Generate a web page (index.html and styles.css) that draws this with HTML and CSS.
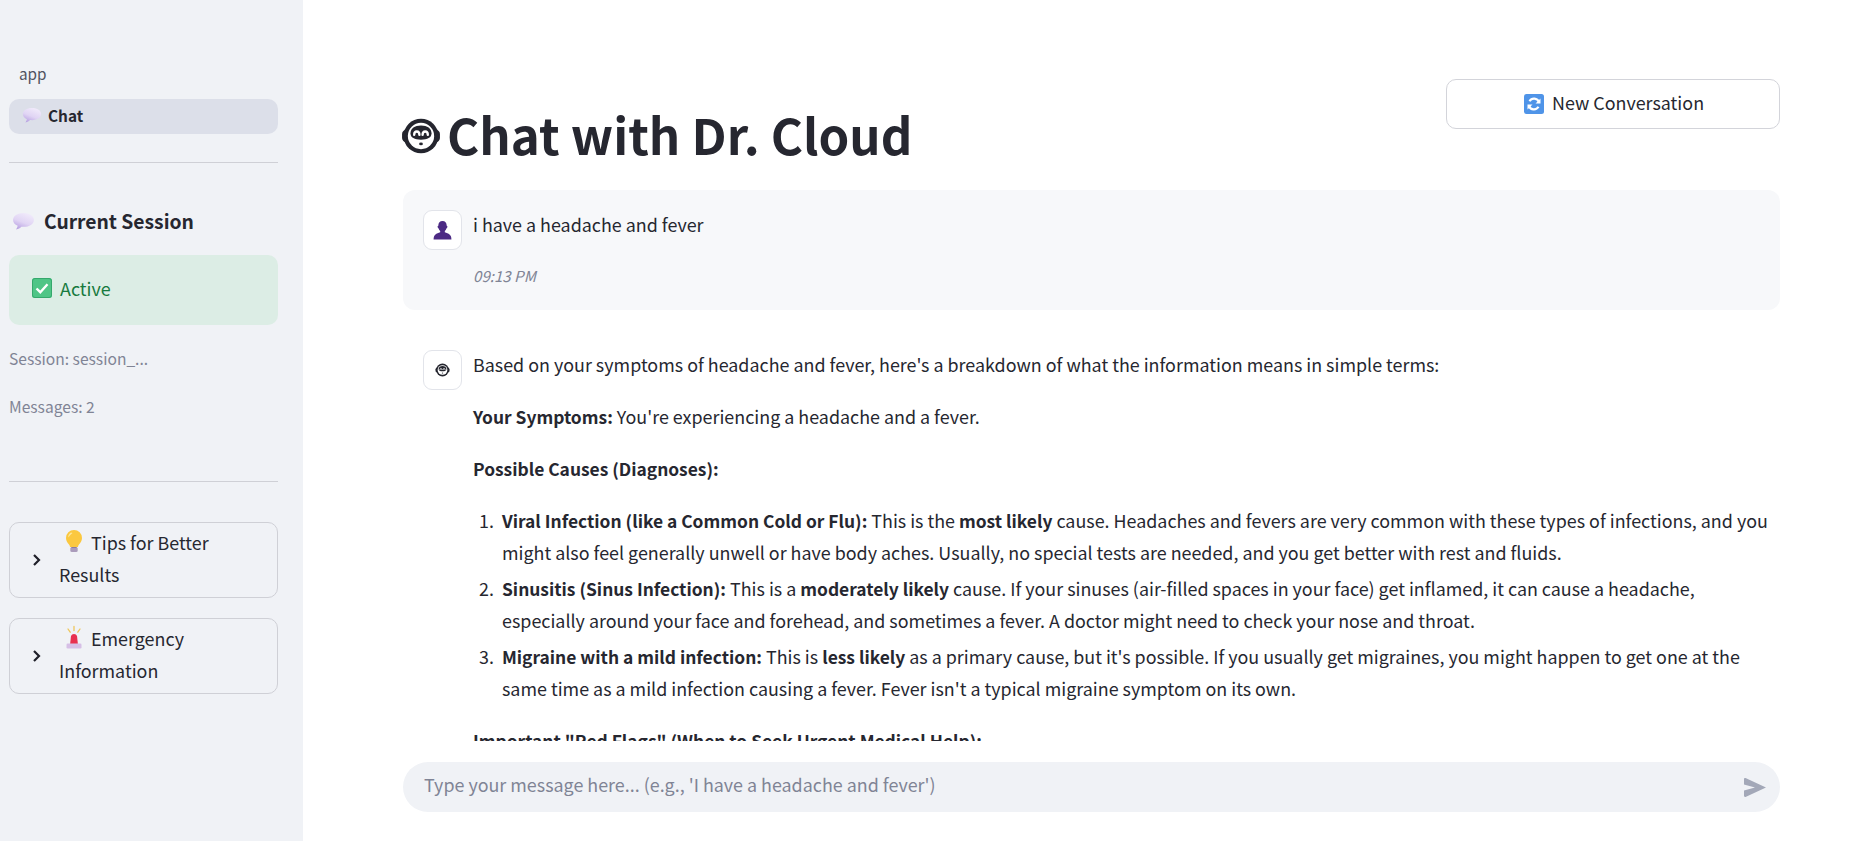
FILE: index.html
```html
<!DOCTYPE html>
<html lang="en">
<head>
  <meta charset="UTF-8" />
  <title>Chat with Dr. Cloud</title>
  <link rel="stylesheet" href="styles.css">
</head>
<body>

<svg class="defs" width="0" height="0">
  <defs>
    <linearGradient id="bubble-fill" x1="0.7" y1="0" x2="0.2" y2="1">
      <stop offset="0" stop-color="#f1ebfb"/>
      <stop offset="0.55" stop-color="#e0d4f4"/>
      <stop offset="1" stop-color="#b49ce0"/>
    </linearGradient>
    <symbol id="bubble" viewBox="0 0 24 20">
      <path fill="url(#bubble-fill)" d="M12 1C5.700 1 1 4.100 1 8.300c0 2.700 1.900 4.900 4.900 6.200-.2 1.300-.8 2.600-1.700 3.800 2.300-.4 4.300-1.500 5.600-2.900.7.100 1.400.2 2.200.2 6.300 0 11-3.100 11-7.300S18.300 1 12 1z"/>
    </symbol>
    <symbol id="face" viewBox="0 0 38 36">
      <rect x="1" y="12" width="36" height="12" rx="4" fill="#24252e"/>
      <circle cx="19" cy="18" r="16.500" fill="#24252e"/>
      <circle cx="19" cy="18" r="12.500" fill="#fff"/>
      <path fill="#24252e" d="M19 8c6 0 10 2.800 10 7.500 0 4.300-3.800 6-10 6s-10-1.700-10-6C9 10.800 13 8 19 8z"/>
      <path fill="none" stroke="#fff" stroke-width="2.200" stroke-linecap="round" d="M12.500 17c0-4.400 5-4.400 5 0M20.500 17c0-4.400 5-4.400 5 0"/>
      <ellipse cx="19" cy="25.500" rx="1.800" ry="1.300" fill="#24252e"/>
    </symbol>
  </defs>
</svg>

<aside class="sidebar">
  <div class="nav-label">app</div>
  <a class="nav-item">
    <svg class="emoji nav-emoji"><use href="#bubble"/></svg>
    <span>Chat</span>
  </a>
  <hr class="rule rule-top">

  <h3 class="session-title">
    <svg class="emoji title-emoji"><use href="#bubble"/></svg>
    Current Session
  </h3>
  <div class="status">
    <svg class="emoji status-emoji" viewBox="0 0 20 20">
      <rect x="0" y="0" width="20" height="20" rx="2.500" fill="#4fc586"/>
      <rect x="0.500" y="0.500" width="19" height="19" rx="2.500" fill="none" stroke="#35a86c" stroke-width="1"/>
      <path d="M4.500 10.500l3.800 3.700 7.200-8" fill="none" stroke="#fff" stroke-width="2.400"/>
    </svg>
    Active
  </div>
  <p class="meta meta-first">Session: session_...</p>
  <p class="meta">Messages: 2</p>
  <hr class="rule rule-bottom">

  <div class="expander">
    <svg class="chevron" viewBox="0 0 10 14"><path d="M2 2l5 5-5 5" fill="none" stroke="#1f2029" stroke-width="2.200"/></svg>
    <div class="expander-text">
      <svg class="emoji expander-emoji" viewBox="0 0 18 24">
        <path fill="#fbc83f" d="M9 1a8 8 0 0 0-8 8c0 3 1.600 4.700 3 6.500.7.900 1 1.700 1 2.500h8c0-.8.300-1.600 1-2.500 1.400-1.800 3-3.500 3-6.500a8 8 0 0 0-8-8z"/>
        <path fill="#fde79a" d="M6 3.500C4 4.500 3 6.500 3.300 8.500 4.500 7 5.500 5.500 7.500 4z"/>
        <rect x="5.500" y="18" width="7" height="5" rx="1.500" fill="#8c7ba0"/>
        <path stroke="#c9bdd6" stroke-width="1" d="M5.500 20h7M5.500 22h7"/>
      </svg>Tips for Better Results
    </div>
  </div>

  <div class="expander">
    <svg class="chevron" viewBox="0 0 10 14"><path d="M2 2l5 5-5 5" fill="none" stroke="#1f2029" stroke-width="2.200"/></svg>
    <div class="expander-text">
      <svg class="emoji expander-emoji" viewBox="0 0 18 24">
        <path fill="#e8304f" d="M5 20l1-9a3.200 3.200 0 0 1 6 0l1 9z"/>
        <rect x="1.500" y="18.500" width="15" height="5" rx="1.200" fill="#d6bfe6"/>
        <path stroke="#efc65a" stroke-width="1.300" stroke-linecap="round" d="M9 1.500v4M3 4l2.200 3.200M15 4l-2.200 3.200"/>
      </svg>Emergency Information
    </div>
  </div>
</aside>

<main class="main">
  <div class="top-row">
    <h1 class="page-title"><svg class="title-face"><use href="#face"/></svg>Chat with Dr. Cloud</h1>
    <button class="new-btn">
      <svg class="emoji btn-emoji" viewBox="0 0 20 20">
        <rect width="20" height="20" rx="2.500" fill="#4f94e8"/>
        <path fill="none" stroke="#fff" stroke-width="2.200" d="M15 8a5.300 5.300 0 0 0-9.500-.8M5 12a5.300 5.300 0 0 0 9.500.8"/>
        <path fill="#fff" d="M16.500 4.500v5h-5zM3.500 15.500v-5h5z"/>
      </svg>
      New Conversation
    </button>
  </div>

  <div class="messages">
    <div class="message message-user">
      <div class="avatar">
        <svg class="avatar-user" viewBox="0 0 20 20">
          <path fill="#4c2a84" d="M6 5.500C6 2.500 7.500 1 10 1s4 1.500 4 4.500c.6.200.8.700.6 1.400-.2.600-.5 1-.9 1.100-.3 1-.8 1.900-1.500 2.500v1.200c2.500.8 5.200 2 5.800 3.800.3.900.5 2 .5 3H1.500c0-1 .2-2.100.5-3 .6-1.800 3.300-3 5.800-3.800v-1.200C7.100 9.900 6.600 9 6.300 8c-.4-.1-.7-.5-.9-1.100-.2-.7 0-1.200.6-1.400z"/>
        </svg>
      </div>
      <div class="message-body">
        <p>i have a headache and fever</p>
        <p class="timestamp">09:13 PM</p>
      </div>
    </div>

    <div class="message">
      <div class="avatar">
        <svg class="avatar-face"><use href="#face"/></svg>
      </div>
      <div class="message-body">
        <p>Based on your symptoms of headache and fever, here's a breakdown of what the information means in simple terms:</p>
        <p><strong>Your Symptoms:</strong> You're experiencing a headache and a fever.</p>
        <p><strong>Possible Causes (Diagnoses):</strong></p>
        <ol>
          <li><strong>Viral Infection (like a Common Cold or Flu):</strong> This is the <strong>most likely</strong> cause. Headaches and fevers are very common with these types of infections, and you might also feel generally unwell or have body aches. Usually, no special tests are needed, and you get better with rest and fluids.</li>
          <li><strong>Sinusitis (Sinus Infection):</strong> This is a <strong>moderately likely</strong> cause. If your sinuses (air-filled spaces in your face) get inflamed, it can cause a headache, especially around your face and forehead, and sometimes a fever. A doctor might need to check your nose and throat.</li>
          <li><strong>Migraine with a mild infection:</strong> This is <strong>less likely</strong> as a primary cause, but it's possible. If you usually get migraines, you might happen to get one at the same time as a mild infection causing a fever. Fever isn't a typical migraine symptom on its own.</li>
        </ol>
        <p><strong>Important "Red Flags" (When to Seek Urgent Medical Help):</strong></p>
      </div>
    </div>
  </div>

  <div class="chat-input">
    <span class="placeholder">Type your message here... (e.g., 'I have a headache and fever')</span>
    <svg class="send" viewBox="0 0 22 19"><path fill="#a3a8b8" d="M0 1.200C0 .3.700-.2 1.500.1L22 9.500 1.500 18.900C.7 19.200 0 18.700 0 17.800v-5.300l11-3-11-3z"/></svg>
  </div>
</main>

</body>
</html>
```

FILE: styles.css
```css
* { box-sizing: border-box; }

html, body { height: 100%; }

body {
  margin: 0;
  display: flex;
  height: 841px;
  overflow: hidden;
  font-family: "Noto Sans CJK SC", "Noto Sans", sans-serif;
  font-size: 17.900px;
  line-height: 32px;
  color: #262730;
  background: #fff;
}

.defs { position: absolute; }

.emoji { display: inline-block; flex: none; }

/* sidebar */
.sidebar {
  width: 303px;
  flex: none;
  background: #f0f2f6;
  padding: 59px 25px 0 9px;
}

.nav-label {
  padding-left: 10px;
  font-size: 15.300px;
  line-height: 28px;
  color: #50525f;
}

.nav-item {
  display: flex;
  align-items: center;
  height: 35px;
  margin-top: 12px;
  padding: 0 0 4px 13px;
  border-radius: 10px;
  background: #dcdfe9;
  font-size: 15.400px;
  font-weight: 600;
}

.nav-emoji { width: 20px; height: 17px; margin: 2px 6px 0 0; }

.rule { margin: 0; border: 0; border-top: 1px solid #cfd0d6; }
.rule-top { margin-top: 28px; }
.rule-bottom { margin-top: 63px; }

.session-title {
  display: flex;
  align-items: center;
  margin: 42px 0 1px;
  padding-left: 3px;
  font-size: 19.300px;
  line-height: 32px;
  font-weight: 600;
}

.title-emoji { width: 23px; height: 19px; margin-right: 9px; }

.status {
  display: flex;
  align-items: center;
  height: 70px;
  margin-top: 18px;
  padding: 0 0 4px 23px;
  border-radius: 10px;
  background: #dcede5;
  color: #177a3e;
}

.status-emoji { width: 20px; height: 20px; margin-right: 8px; }

.meta {
  margin: 24px 0 0;
  font-size: 15.600px;
  line-height: 24px;
  color: #808495;
}

.meta-first { margin-top: 21px; }

.expander {
  display: flex;
  align-items: center;
  height: 76px;
  margin-top: 20px;
  border: 1px solid #cfd0d6;
  border-radius: 10px;
}

.rule-bottom + .expander { margin-top: 40px; }

.chevron { width: 10px; height: 14px; flex: none; margin: 0 17px 0 22px; }

.expander-text { width: 200px; padding-bottom: 4px; }

.expander-emoji { width: 18px; height: 24px; margin: 0 8px 0 6px; vertical-align: -3px; }

/* main column */
.main {
  flex: 1;
  min-width: 0;
  display: flex;
  flex-direction: column;
  padding: 0 74px 0 100px;
}

.top-row {
  display: flex;
  justify-content: space-between;
  align-items: flex-start;
  height: 190px;
}

.page-title {
  display: flex;
  align-items: center;
  margin: 102px 0 0 -2px;
  font-size: 49.200px;
  line-height: 64px;
  font-weight: 700;
}

.title-face { width: 40px; height: 38px; margin: 3px 6px 0 0; }

.new-btn {
  display: flex;
  align-items: center;
  justify-content: center;
  width: 334px;
  height: 50px;
  margin-top: 79px;
  padding: 0 0 4px 2px;
  border: 1px solid #d3d4da;
  border-radius: 10px;
  background: #fff;
  color: #262730;
  font: inherit;
}

.btn-emoji { width: 20px; height: 20px; margin: 3px 8px 0 0; }

.messages {
  height: 551px;
  overflow: hidden;
}

.message {
  display: flex;
  padding: 18px 8px 19px 20px;
}

.message-user {
  height: 120px;
  margin-bottom: 20px;
  border-radius: 12px;
  background: #f7f8fa;
}

.avatar {
  display: flex;
  align-items: center;
  justify-content: center;
  width: 39px;
  height: 40px;
  flex: none;
  margin: 2px 11px 0 0;
  border: 1px solid #e2e4ea;
  border-radius: 9px;
  background: #fff;
}

.avatar-user { width: 21px; height: 21px; }
.avatar-face { width: 15px; height: 14px; }

.message-body { flex: 1; min-width: 0; }

.message-body p { margin: 0 0 20px; }

.message-body .timestamp {
  margin: -1px 0 0;
  font-size: 15.100px;
  font-style: italic;
  color: #808495;
}

ol {
  margin: 0 0 20px;
  padding-left: 29px;
}

li { margin-bottom: 4px; }

li::marker { content: counter(list-item) ".  "; }

strong { font-size: 17.400px; font-weight: 600; line-height: 1; }

.chat-input {
  display: flex;
  align-items: center;
  justify-content: space-between;
  height: 50px;
  margin-top: 21px;
  padding: 0 14px 6px 21px;
  border-radius: 25px;
  background: #f0f2f6;
}

.placeholder { color: #808495; }

.send { width: 22px; height: 19px; margin-top: 6px; }
```
